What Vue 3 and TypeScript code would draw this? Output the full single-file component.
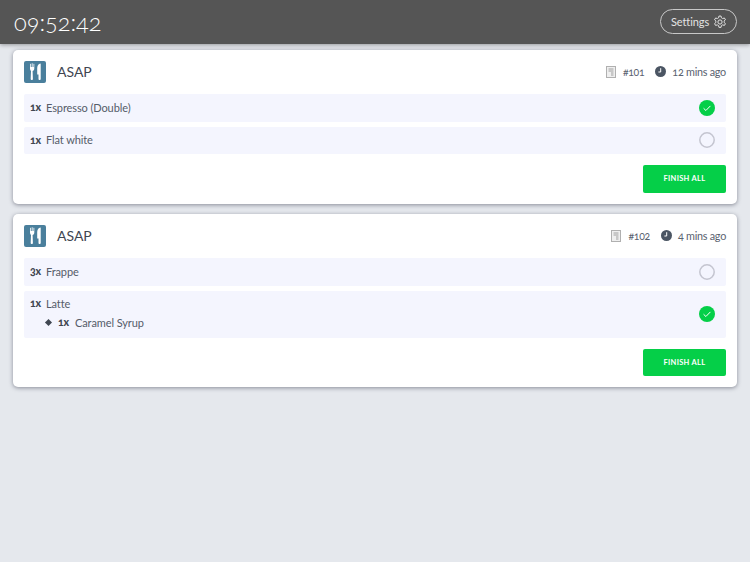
<script setup lang="ts">
interface Extra { qty: string; name: string }
interface Item { qty: string; name: string; done: boolean; extras?: Extra[] }
interface Order { id: string; age: string; items: Item[] }
const orders: Order[] = [
  { id: '#101', age: '12 mins ago', items: [
    { qty: '1x', name: 'Espresso (Double)', done: true },
    { qty: '1x', name: 'Flat white', done: false },
  ]},
  { id: '#102', age: '4 mins ago', items: [
    { qty: '3x', name: 'Frappe', done: false },
    { qty: '1x', name: 'Latte', done: true, extras: [{ qty: '1x', name: 'Caramel Syrup' }] },
  ]},
]
</script>

<template>
  <div class="page">
    <header class="topbar">
      <div class="clock">09:52:42</div>
      <button class="settings">
        <span>Settings</span>
        <svg width="14" height="14" viewBox="0 0 24 24" fill="none" stroke="#e4e4e4" stroke-width="1.7" stroke-linejoin="round">
          <circle cx="12" cy="12" r="3.6" />
          <path d="M10.2 1.800h3.600l.6 3a7.400 7.400 0 0 1 2.200 1.300l2.900-1 1.800 3.100-2.300 2a7.400 7.400 0 0 1 0 2.600l2.300 2-1.800 3.100-2.900-1a7.400 7.400 0 0 1-2.200 1.300l-.6 3h-3.600l-.6-3a7.400 7.400 0 0 1-2.200-1.300l-2.900 1-1.800-3.100 2.300-2a7.400 7.400 0 0 1 0-2.600l-2.300-2 1.800-3.100 2.900 1a7.400 7.400 0 0 1 2.200-1.300z" />
        </svg>
      </button>
    </header>
    <main class="orders">
      <section v-for="o in orders" :key="o.id" class="card">
        <div class="card-head">
          <div class="badge">
            <svg width="22" height="22" viewBox="0 0 22 22" fill="#fff">
              <path d="M6 3c0-.5.8-.5.8 0v3h.9V2.600c0-.5.9-.5.9 0V6h.9V3c0-.5.8-.5.8 0v4.400c0 1.300-.9 2.200-1.700 2.500l.3 8c0 .7-.5 1.100-1.100 1.100s-1.100-.4-1.100-1.100l.3-8C6.900 9.600 6 8.700 6 7.400z" />
              <path d="M16.300 2.600c.3 0 .4.200.4.500v14.800c0 .7-.5 1.100-1.100 1.100s-1.100-.4-1.100-1.100v-4.300h-1.300V7c0-2.400 1.700-4.300 3.100-4.400z" />
            </svg>
          </div>
          <div class="title">ASAP</div>
          <div class="meta">
            <svg class="receipt" width="10" height="12" viewBox="0 0 10 12">
              <rect x=".5" y=".5" width="9" height="11" fill="#efefef" stroke="#b0b0b0" />
              <path d="M2.500 3h5M2.500 5h5M5 7h2.500M5 9h2.500" stroke="#a0a0a0" />
            </svg>
            <span class="num">{{ o.id }}</span>
            <svg class="clock-ic" width="11" height="11" viewBox="0 0 11 11">
              <circle cx="5.500" cy="5.500" r="5.500" fill="#4b5563" />
              <path d="M5.700 2.200v3.800H3.400" stroke="#fff" fill="none" />
            </svg>
            <span class="age">{{ o.age }}</span>
          </div>
        </div>
        <div class="items">
          <div v-for="it in o.items" :key="it.name" class="item">
            <div class="item-text">
              <div class="line"><b class="qty">{{ it.qty }}</b><span>{{ it.name }}</span></div>
              <div v-for="e in it.extras" :key="e.name" class="line extra">
                <span class="diamond"></span><b class="qty">{{ e.qty }}</b><span>{{ e.name }}</span>
              </div>
            </div>
            <svg v-if="it.done" class="status" width="16" height="16" viewBox="0 0 16 16">
              <circle cx="8" cy="8" r="8" fill="#05cf48" />
              <path d="M4.600 8.300l2.300 2.200 4.500-4.600" fill="none" stroke="#fff" stroke-width="1" />
            </svg>
            <svg v-else class="status" width="16" height="16" viewBox="0 0 16 16">
              <circle cx="8" cy="8" r="7.200" fill="none" stroke="#c4c5d0" stroke-width="1.500" />
            </svg>
          </div>
        </div>
        <div class="actions"><button class="finish">FINISH ALL</button></div>
      </section>
    </main>
  </div>
</template>

<style>
html, body { margin: 0; background: #e5e8ed; }
</style>

<style scoped>
.page {
  width: 750px; height: 562px; overflow: hidden; background: #e5e8ed;
  font-family: Lato, "Open Sans", sans-serif; color: #4b5563;
  font-variant-numeric: oldstyle-nums;
}
.topbar {
  height: 44px; background: #555; box-shadow: 0 1px 4px rgba(0,0,0,.35);
  display: flex; align-items: center; justify-content: space-between;
  padding: 0 13px 0 14px; box-sizing: border-box;
}
.clock { color: #fff; font-size: 23.500px; font-weight: 300; margin-top: -1px; }
.settings {
  height: 25px; width: 77px; box-sizing: border-box; padding: 0 0 0 10px; border: 1px solid #c8c8c8; border-radius: 13px;
  background: transparent; color: #e4e4e4; font: inherit; font-size: 11px; letter-spacing: -.1px;
  display: flex; align-items: center; gap: 4px; margin-top: -1px;
}
.orders { padding: 6px 13px 0; display: flex; flex-direction: column; gap: 10.500px; }
.card {
  background: #fff; border-radius: 5px; box-shadow: 0 1px 4px rgba(60,64,80,.55);
  padding: 0 11px 11px; 
}
.card-head { height: 44px; display: flex; align-items: center; }
.badge {
  width: 22px; height: 22px; border-radius: 2px; background: #4a7f9c; margin-top: -1px;
}
.badge svg { display: block; }
.title { margin-left: 11px; font-size: 14px; color: #3f4651; margin-top: -1px; }
.meta { margin-left: auto; display: flex; align-items: center; font-size: 11px; color: #5a6270; margin-top: -1px; }
.num { margin-left: 7px; font-size: 10.500px; letter-spacing: -.3px; }
.clock-ic { margin-left: 11px; }
.age { margin-left: 6px; font-size: 10.800px; letter-spacing: -.25px; }
.items { display: flex; flex-direction: column; gap: 5px; }
.item {
  background: #f4f5fe; border-radius: 2px; min-height: 27.500px; display: flex; align-items: center;
  justify-content: space-between; padding: 0 11px 0 6px; box-sizing: border-box; font-size: 11px; color: #555c69; letter-spacing: -.1px;
}
.item-text { display: flex; flex-direction: column; padding: 6px 0 6px; gap: 5px; }
.line { display: flex; align-items: center; height: 15px; margin-top: -1px; }
.extra { margin-bottom: 2px; padding-left: 16px; }
.qty { width: 16px; font-weight: 900; font-size: 10.500px; color: #3f4651; }
.extra .qty { width: 17px; }
.diamond { width: 5px; height: 5px; margin-right: 7px; background: #3f4651; transform: rotate(45deg); }
.status { display: block; }
.actions { display: flex; justify-content: flex-end; margin-top: 11px; }
.finish {
  width: 83px; height: 27.500px; border: 0; border-radius: 2px; background: #05cf48; color: #fff;
  font: inherit; font-size: 7.500px; font-weight: 700; letter-spacing: .3px; padding: 0;
}
</style>
